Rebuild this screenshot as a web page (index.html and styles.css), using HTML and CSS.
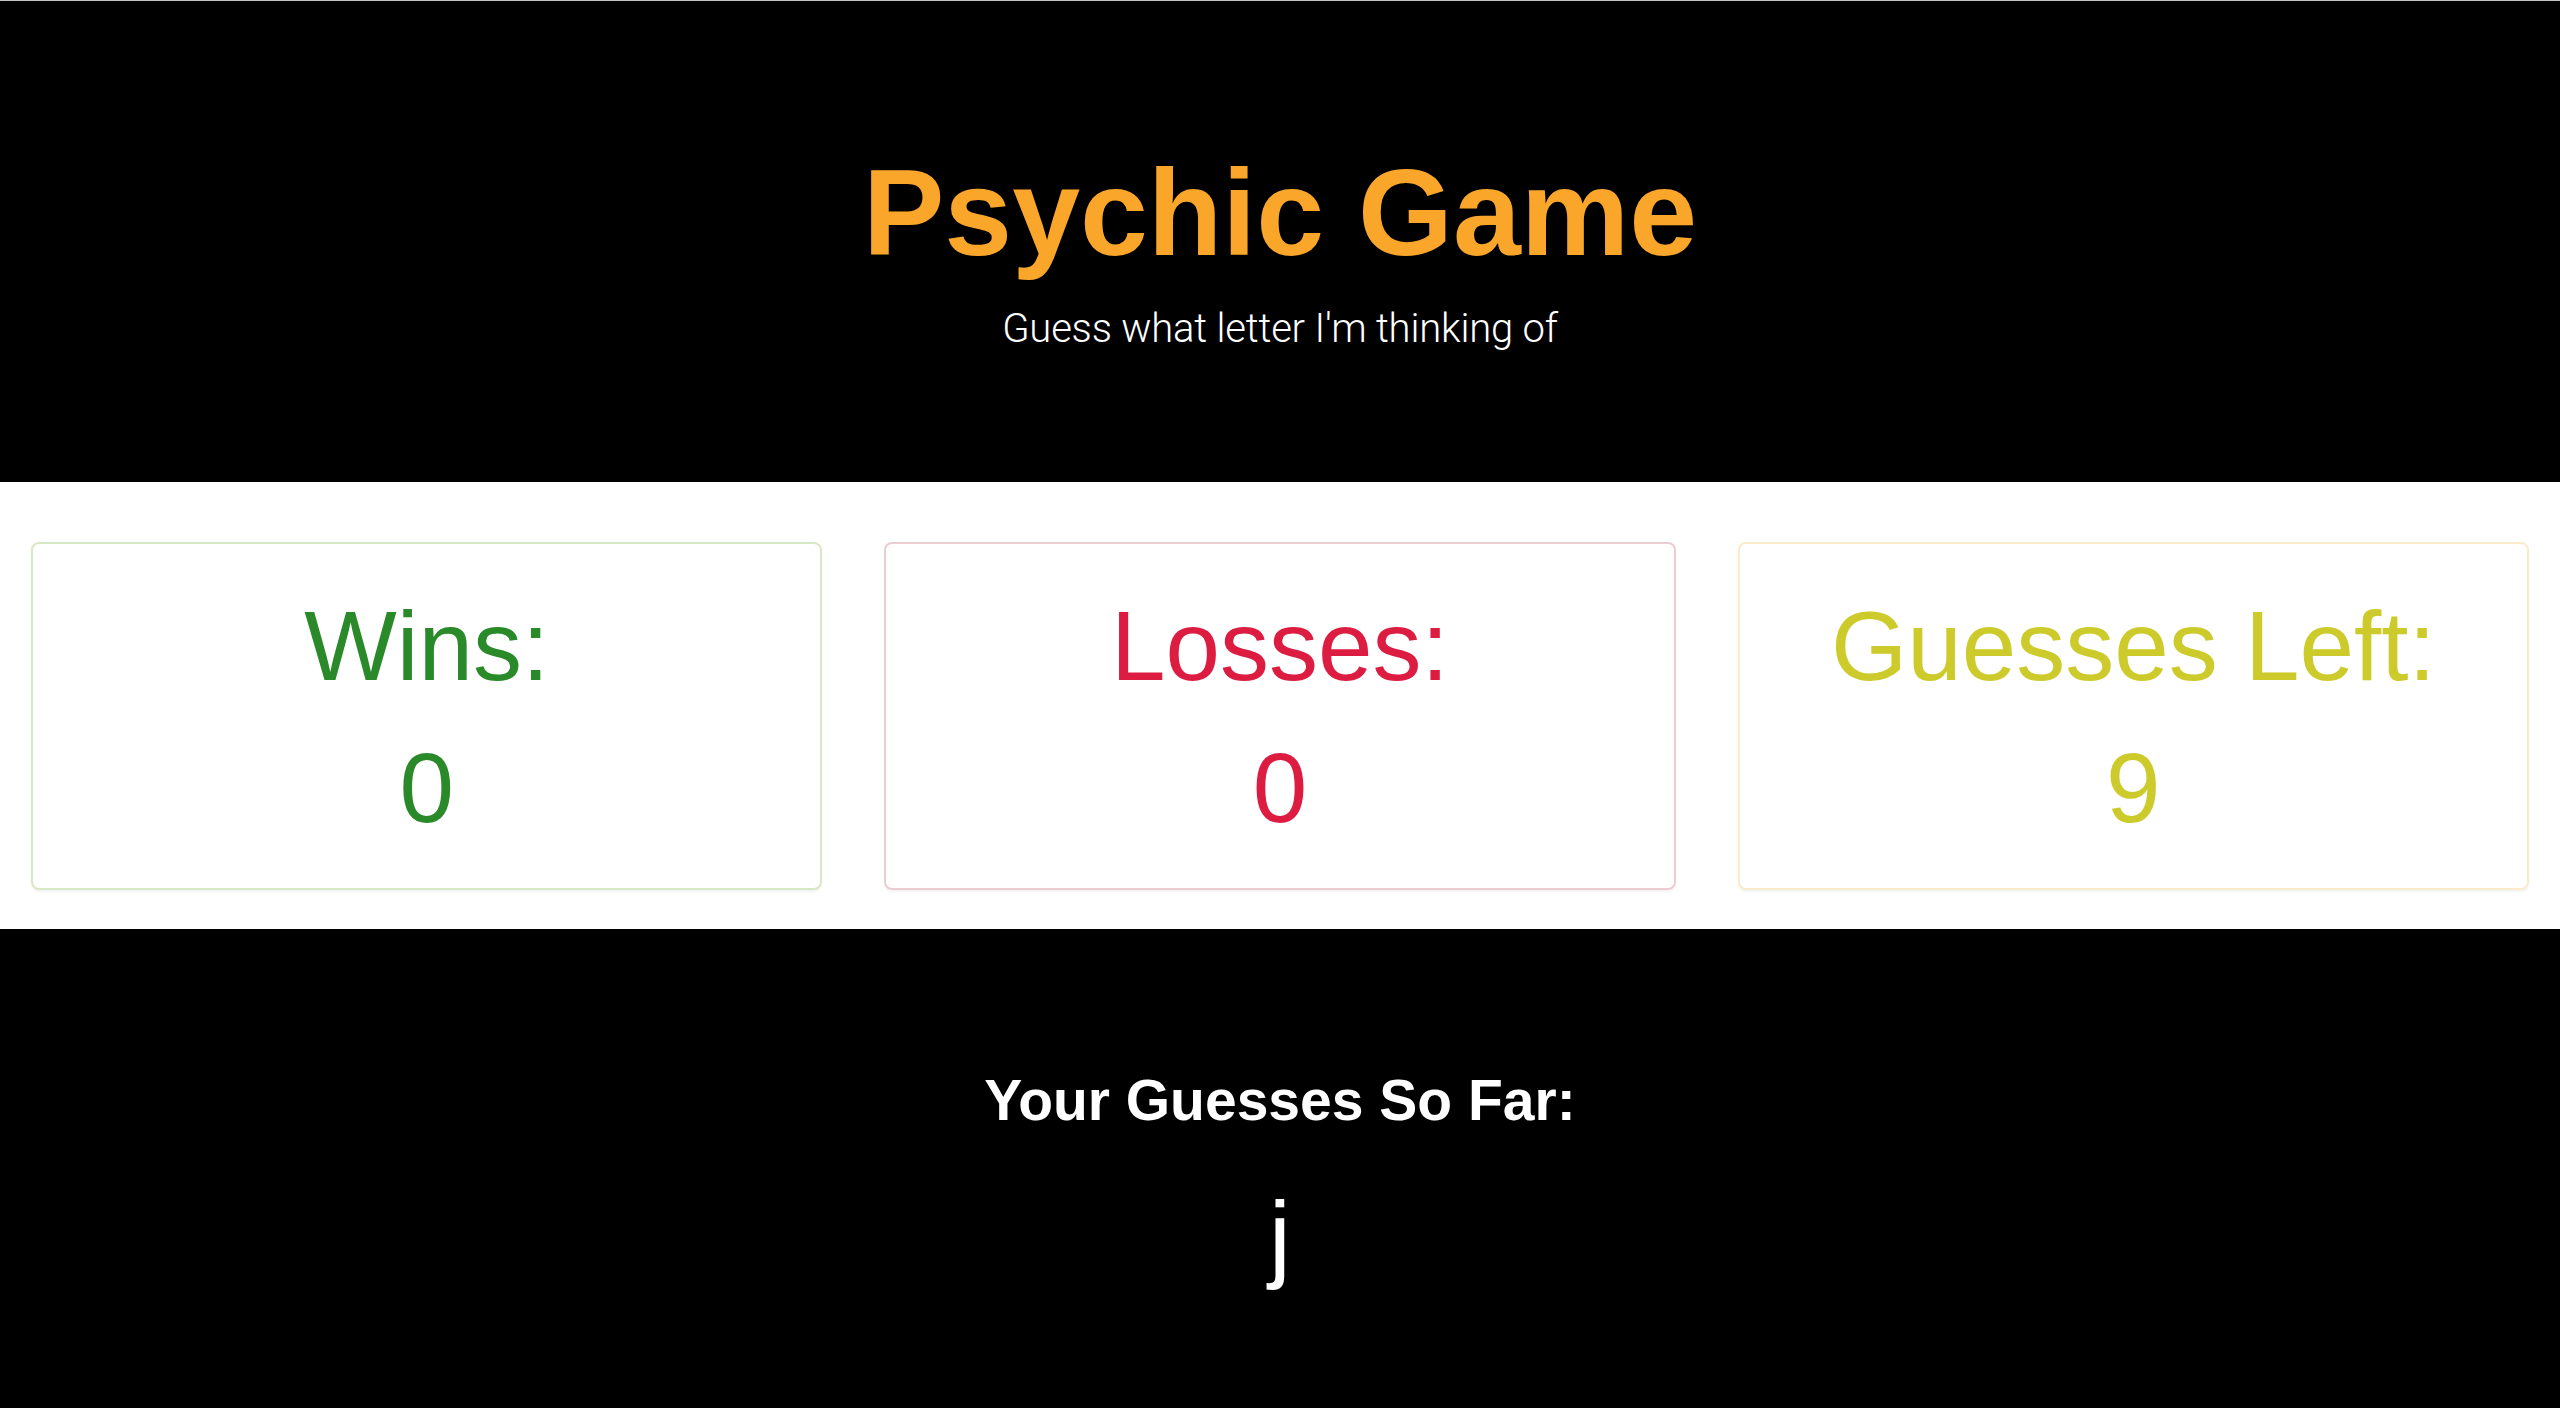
FILE: index.html
```html
<!DOCTYPE html>
<html lang="en">
<head>
<meta charset="utf-8">
<title>Psychic Game</title>
<link rel="stylesheet" href="styles.css">
</head>
<body>
<header class="hero">
  <h1 class="hero-title">Psychic Game</h1>
  <p class="hero-sub">Guess what letter I'm thinking of</p>
</header>
<main class="scores">
  <section class="panel panel-success">
    <div class="panel-label">Wins:</div>
    <div class="panel-value">0</div>
  </section>
  <section class="panel panel-danger">
    <div class="panel-label">Losses:</div>
    <div class="panel-value">0</div>
  </section>
  <section class="panel panel-warning">
    <div class="panel-label">Guesses Left:</div>
    <div class="panel-value">9</div>
  </section>
</main>
<footer class="guesses">
  <h3 class="guesses-title">Your Guesses So Far:</h3>
  <div class="guesses-list">j</div>
</footer>
</body>
</html>
```
FILE: styles.css
```css
* { box-sizing: border-box; }
html, body {
  margin: 0;
  padding: 0;
}
body {
  background: #ffffff;
  font-family: "Liberation Sans", Arial, sans-serif;
  height: 1408px;
  overflow: hidden;
  display: flex;
  flex-direction: column;
}
.hero {
  background: #000;
  border-top: 1px solid #c4c4c4;
  height: 482px;
  padding-top: 151px;
  text-align: center;
  color: #fff;
}
.hero-title {
  margin: 0;
  font-size: 122px;
  line-height: 122px;
  font-weight: 700;
  color: #faa62a;
}
.hero-sub {
  margin: 35px 0 0;
  font-family: Roboto, "Liberation Sans", Arial, sans-serif;
  font-size: 40px;
  line-height: 40px;
  font-weight: 300;
  letter-spacing: -0.2px;
  color: #fff;
}
.scores {
  display: grid;
  grid-template-columns: repeat(3, 1fr);
  column-gap: 62px;
  padding: 60px 31px 39px;
  background: #fff;
}
.panel {
  height: 348px;
  border: 2px solid;
  border-radius: 8px;
  box-shadow: 0 2px 2px rgba(0, 0, 0, 0.05);
  text-align: center;
  padding-top: 31px;
  font-size: 98px;
  line-height: 142px;
}
.panel-success { border-color: #d6e9c6; color: #2a8a2a; }
.panel-danger { border-color: #ebccd1; color: #dc1c40; }
.panel-warning { border-color: #faebcc; color: #cdcb2b; }
.guesses {
  flex: 1;
  background: #000;
  color: #fff;
  text-align: center;
  padding-top: 143px;
}
.guesses-title {
  margin: 0;
  font-size: 57px;
  line-height: 57px;
  font-weight: 700;
}
.guesses-list {
  margin-top: 58px;
  font-size: 98px;
  line-height: 98px;
}
```
